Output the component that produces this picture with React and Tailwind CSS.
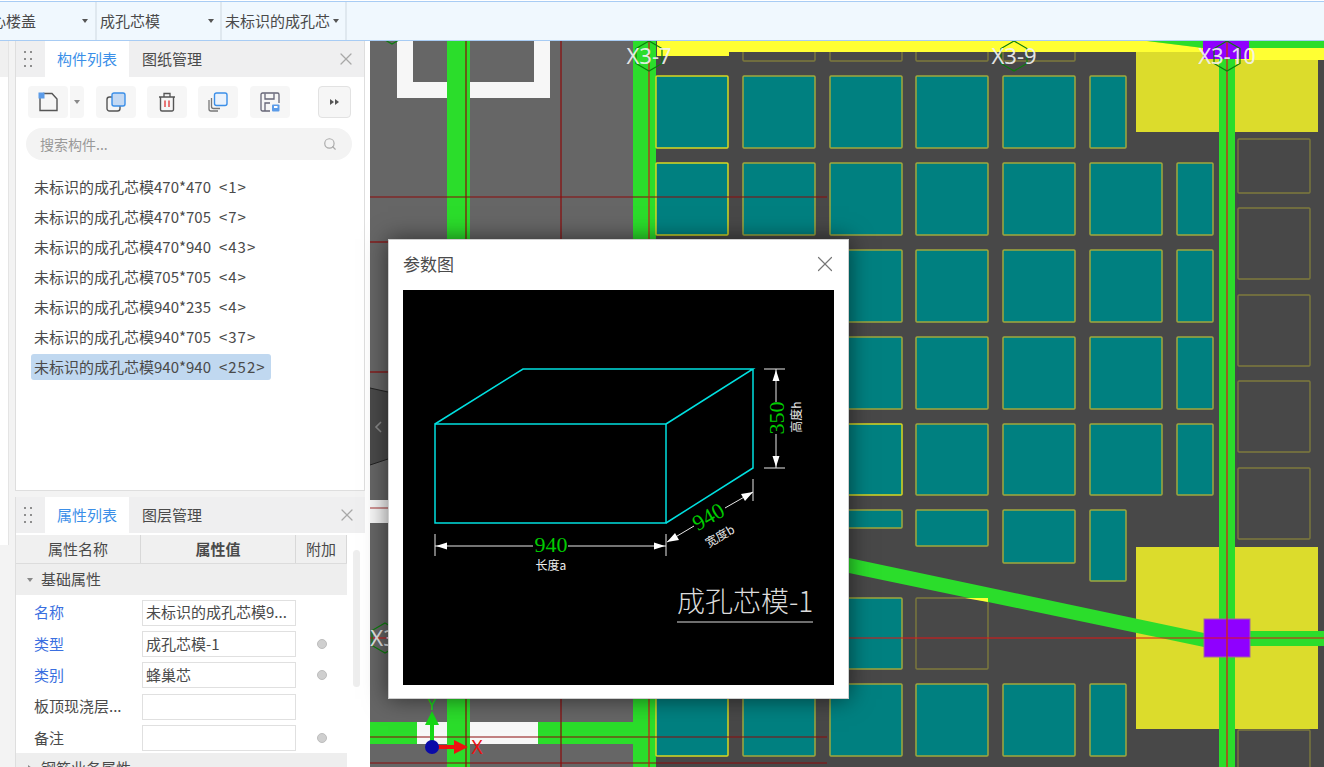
import React from 'react';
import { X, Search } from 'lucide-react';

const components = [
  ['未标识的成孔芯模470*470', '<1>'],
  ['未标识的成孔芯模470*705', '<7>'],
  ['未标识的成孔芯模470*940', '<43>'],
  ['未标识的成孔芯模705*705', '<4>'],
  ['未标识的成孔芯模940*235', '<4>'],
  ['未标识的成孔芯模940*705', '<37>'],
  ['未标识的成孔芯模940*940', '<252>', true],
];

const props = [
  { name: '名称', value: '未标识的成孔芯模9...', blue: true },
  { name: '类型', value: '成孔芯模-1', blue: true, radio: true },
  { name: '类别', value: '蜂巢芯', blue: true, radio: true },
  { name: '板顶现浇层...', value: '' },
  { name: '备注', value: '', radio: true },
];

const COLS = [[656, 728], [743, 815], [830, 902], [916, 988], [1003, 1075], [1090, 1162], [1177, 1213]];
const NARROW = [1090, 1126];
const FULL_ROWS = [[163, 235], [250, 322], [337, 409], [424, 495]];

// teal slabs of the floor plan: [x1, y1, x2, y2]
const slabs = [
  ...COLS.slice(0, 5).map((c) => [c[0], 76, c[1], 148]),
  [NARROW[0], 76, NARROW[1], 148],
  ...FULL_ROWS.flatMap(([y1, y2]) => COLS.map((c) => [c[0], y1, c[1], y2])),
  [830, 510, 902, 528],
  [916, 510, 988, 546],
  [1003, 510, 1075, 563],
  [1090, 510, 1126, 581],
  [830, 598, 902, 669],
  [656, 684, 728, 756],
  [743, 684, 815, 756],
  [830, 684, 902, 756],
  [916, 684, 988, 756],
  [1003, 684, 1075, 756],
  [1090, 684, 1126, 756],
];

// empty outlined openings
const outlines = [
  [743, 30, 815, 61], [830, 30, 902, 61], [916, 30, 988, 61], [1003, 30, 1075, 61],
  [1238, 139, 1310, 193], [1238, 208, 1310, 279], [1238, 295, 1310, 366],
  [1238, 381, 1310, 452], [1238, 468, 1310, 539], [1238, 730, 1310, 790],
  [916, 598, 988, 669],
];

function Hex({ cx, cy, r = 15 }) {
  const pts = [0, 1, 2, 3, 4, 5]
    .map((i) => {
      const a = (Math.PI / 3) * i - Math.PI / 2;
      return `${cx + r * Math.cos(a)},${cy + r * Math.sin(a)}`;
    })
    .join(' ');
  return <polygon points={pts} fill="none" stroke="#0b7d0b" strokeWidth="1.2" />;
}

function AxisLabel({ x, y, children }) {
  return (
    <text x={x} y={y} textAnchor="middle" fontSize="22" fontFamily="'Noto Sans', sans-serif" fill="#f2f2f2" fillOpacity="0.92">
      {children}
    </text>
  );
}

function PlanCanvas() {
  return (
    <svg viewBox="370 41 954 726" className="block w-full h-full">
      <rect x="370" y="41" width="954" height="726" fill="#666666" />
      <rect x="656" y="41" width="668" height="726" fill="#484848" />

      {/* white beams */}
      <path d="M397 41H413V82H534V41H550V98H397Z" fill="#f7f7f7" />
      <rect x="370" y="500" width="18" height="23" fill="#f7f7f7" />
      <rect x="417" y="722" width="121" height="22" fill="#f7f7f7" />

      {/* dark patch next to the panel handle */}
      <path d="M370 388L388 392V459L370 465Z" fill="#4a4a4a" />
      <path d="M370 388L388 392M370 465L388 459" stroke="#222" strokeWidth="1" />
      <path d="M381 422L376 427L381 432" fill="none" stroke="#8a8a8a" strokeWidth="1.6" />

      {/* green beams */}
      <rect x="447" y="41" width="23" height="726" fill="#2bdd2b" />
      <rect x="633" y="41" width="23" height="726" fill="#2bdd2b" />
      <rect x="370" y="722" width="47" height="22" fill="#2bdd2b" />
      <rect x="538" y="722" width="95" height="22" fill="#2bdd2b" />

      {outlines.map(([x1, y1, x2, y2]) => (
        <rect key={`${x1}-${y1}`} x={x1} y={y1} width={x2 - x1} height={y2 - y1} rx="1" fill="none" stroke="#7d7a3c" strokeWidth="1.4" />
      ))}

      {/* teal slabs */}
      {slabs.map(([x1, y1, x2, y2]) => (
        <rect
          key={`${x1}-${y1}`}
          x={x1}
          y={y1}
          width={x2 - x1}
          height={y2 - y1}
          rx="1"
          fill="#008080"
          stroke={x1 === 656 || (x1 === 830 && y1 === 424) ? '#d8d820' : '#a0a83c'}
          strokeWidth="1.5"
        />
      ))}

      {/* column caps */}
      <rect x="1136" y="41" width="182" height="91" fill="#dcdc2c" />
      <rect x="1136" y="547" width="182" height="182" fill="#dcdc2c" />

      {/* top band */}
      <path d="M657 41H1147L1203 48V52H729V56H657Z" fill="#ffff33" />
      <rect x="1235" y="48" width="89" height="12" fill="#ffff33" />
      <path d="M1147 41H1324V48H1203Z" fill="#2bdd2b" />

      {/* green on top of the caps */}
      <rect x="1219" y="41" width="16" height="726" fill="#2bdd2b" />
      <path d="M849 558L1204 633V647L849 573Z" fill="#2bdd2b" />
      <rect x="1250" y="631" width="74" height="15" fill="#2bdd2b" />
      <path d="M965 598H988V602Z" fill="#ffff33" />

      {/* columns */}
      <rect x="1203" y="41" width="46" height="18" fill="#8f00ff" />
      <rect x="1204" y="619" width="46" height="38" fill="#8f00ff" stroke="#a06a9a" strokeWidth="1" />

      {/* axis lines */}
      <g stroke="#8b0a0a" strokeWidth="1.2">
        <line x1="466" y1="41" x2="466" y2="767" />
        <line x1="561" y1="41" x2="561" y2="767" />
        <line x1="370" y1="197" x2="827" y2="197" />
        <line x1="370" y1="242" x2="388" y2="242" />
        <line x1="370" y1="372" x2="388" y2="372" />
        <line x1="370" y1="737" x2="827" y2="737" />
        <line x1="370" y1="763" x2="827" y2="763" />
      </g>
      <line x1="370" y1="508" x2="388" y2="508" stroke="#c47a7a" strokeWidth="1.6" />
      <line x1="649" y1="41" x2="649" y2="767" stroke="#cc1a1a" strokeWidth="1.2" />
      <line x1="1227" y1="41" x2="1227" y2="767" stroke="#c82a1a" strokeWidth="1.4" />
      <line x1="370" y1="638" x2="1324" y2="638" stroke="#e01414" strokeWidth="1.2" />

      {/* axis bubbles */}
      <Hex cx={392} cy={29} />
      <Hex cx={649} cy={56} />
      <Hex cx={1014} cy={56} />
      <Hex cx={1227} cy={56} />
      <Hex cx={385} cy={638} />
      <AxisLabel x={649} y={64}>X3-7</AxisLabel>
      <AxisLabel x={1014} y={64}>X3-9</AxisLabel>
      <AxisLabel x={1227} y={64}>X3-10</AxisLabel>
      <AxisLabel x={383} y={646}>X3</AxisLabel>

      {/* ucs gizmo */}
      <rect x="430" y="725" width="4" height="22" fill="#16d816" />
      <path d="M432 711L439 725H425Z" fill="#16d816" />
      <text x="432" y="710" textAnchor="middle" fontSize="17" fontFamily="'Noto Sans', sans-serif" fill="#16d816">Y</text>
      <rect x="432" y="745" width="24" height="4" fill="#ee1111" />
      <path d="M468 747L454 740V754Z" fill="#ee1111" />
      <text x="477" y="754" textAnchor="middle" fontSize="19" fontFamily="'Noto Sans', sans-serif" fill="#ee1111">X</text>
      <circle cx="432" cy="747" r="7" fill="#0a0aa8" />
    </svg>
  );
}

function Dim({ d }) {
  return <path d={d} stroke="#e8e8e8" strokeWidth="1" fill="none" />;
}

function ParamDrawing() {
  const cad = "'Liberation Serif', 'Noto Sans CJK SC', serif";
  const cjk = "'Noto Sans CJK SC', sans-serif";
  return (
    <svg viewBox="403 290 431 395" className="block w-full h-full bg-black">
      <g stroke="#00e0e0" strokeWidth="1.5" fill="none">
        <rect x="435" y="424" width="231" height="99" />
        <path d="M435 424L523 369H753L666 424M753 369V468L666 523" />
      </g>

      {/* length */}
      <Dim d="M435 534V556M666 534V556M435 546H533M568 546H666" />
      <path d="M436 546L447 542.5V549.5ZM665 546L654 542.5V549.5Z" fill="#fff" />
      <text x="551" y="552" textAnchor="middle" fontSize="22" fontFamily={cad} fill="#00cc00">940</text>
      <text x="551" y="570" textAnchor="middle" fontSize="12" fontFamily={cjk} fill="#f0f0f0">长度a</text>

      {/* height */}
      <Dim d="M764 369H785M764 468H785M776 369V402M776 434V468" />
      <path d="M776 370L772.5 381H779.5ZM776 467L772.5 456H779.5Z" fill="#fff" />
      <text transform="translate(784 418) rotate(-90)" textAnchor="middle" fontSize="22" fontFamily={cad} fill="#00cc00">350</text>
      <text transform="translate(801 417) rotate(-90)" textAnchor="middle" fontSize="12" fontFamily={cjk} fill="#e8e8e8">高度h</text>

      {/* width */}
      <Dim d="M753 479V501M667 542L694 526M725 508L753 492" />
      <path d="M753 492L741 494L745 501ZM667 542L679 540L675 533Z" fill="#fff" />
      <text transform="translate(712 523) rotate(-30)" textAnchor="middle" fontSize="22" fontFamily={cad} fill="#00cc00">940</text>
      <text transform="translate(722 540) rotate(-30)" textAnchor="middle" fontSize="12" fontFamily={cjk} fill="#e8e8e8">宽度b</text>

      <text x="677" y="612" fontSize="28" fontWeight="300" fontFamily={cjk} fill="#dcdcdc">成孔芯模-1</text>
      <line x1="677" y1="622" x2="813" y2="622" stroke="#dcdcdc" strokeWidth="1" />
    </svg>
  );
}

function Grip() {
  return (
    <div className="w-[29px] pl-[8px] flex shrink-0">
      <div className="grid grid-cols-2 gap-x-[4px] gap-y-[5px]">
        {[0, 1, 2, 3, 4, 5].map((i) => (
          <span key={i} className="w-[2px] h-[2px] bg-[#8e8e8e]" />
        ))}
      </div>
    </div>
  );
}

function PanelTabs({ active, other }) {
  return (
    <div className="flex items-center h-[36px] bg-[#efeff0] shrink-0">
      <Grip />
      <div className="w-[84px] h-full bg-white flex items-center justify-center text-[#3b8fe8]">{active}</div>
      <div className="ml-[13px] text-[#4a4a4a]">{other}</div>
      <X size={20} strokeWidth={1.5} className="ml-auto mr-[8px] text-[#a8a8a8]" />
    </div>
  );
}

function ToolBtn({ children, className = 'w-[40px]' }) {
  return (
    <button className={`h-[32px] bg-[#f6f6f6] rounded-[4px] flex items-center justify-center ${className}`}>
      {children}
    </button>
  );
}

function NewIcon() {
  return (
    <svg width="20" height="20" viewBox="0 0 20 20" fill="none">
      <path d="M2 5V18.5H19V7L14 1.5H5" stroke="#555" strokeWidth="1.4" />
      <rect x="0.5" y="0.5" width="6" height="6" fill="#5b9be8" />
    </svg>
  );
}

function CopyIcon() {
  return (
    <svg width="20" height="20" viewBox="0 0 20 20" fill="none">
      <rect x="1" y="5" width="13" height="14" rx="2.5" stroke="#555" strokeWidth="1.4" />
      <rect x="6" y="1" width="13" height="13" rx="2" fill="#c4d9f3" stroke="#3b8fe8" strokeWidth="1.4" />
    </svg>
  );
}

function TrashIcon() {
  return (
    <svg width="18" height="20" viewBox="0 0 18 20" fill="none">
      <path d="M1 5H17M6 5V1.5H12V5" stroke="#555" strokeWidth="1.3" />
      <path d="M2.5 5V17.5A1.5 1.5 0 0 0 4 19H14A1.5 1.5 0 0 0 15.5 17.5V5" stroke="#555" strokeWidth="1.4" />
      <path d="M7 8.5V15M11 8.5V15" stroke="#e34b4b" strokeWidth="1.5" />
    </svg>
  );
}

function LayersIcon() {
  return (
    <svg width="20" height="20" viewBox="0 0 20 20" fill="none">
      <path d="M1 8V17A2 2 0 0 0 3 19H10" stroke="#777" strokeWidth="1.3" />
      <path d="M3.5 6V14.5A2 2 0 0 0 5.5 16.5H12" stroke="#777" strokeWidth="1.3" />
      <rect x="6.5" y="1" width="12.5" height="12.5" rx="2" fill="#eaf2fc" stroke="#3b8fe8" strokeWidth="1.4" />
    </svg>
  );
}

function SaveIcon() {
  return (
    <svg width="20" height="20" viewBox="0 0 20 20" fill="none">
      <path d="M2.5 1H17.5A1.5 1.5 0 0 1 19 2.5V11M10 19H2.5A1.5 1.5 0 0 1 1 17.5V2.5A1.5 1.5 0 0 1 2.5 1" stroke="#667" strokeWidth="1.3" />
      <path d="M5 1.5V7H14V1.5M5 19V11H10" stroke="#667" strokeWidth="1.3" />
      <rect x="12" y="12.5" width="7.5" height="7" rx="1" fill="#5b9be8" />
      <rect x="14" y="14" width="3.5" height="2" fill="#fff" />
    </svg>
  );
}

function ComponentList() {
  return (
    <section className="h-[450px] bg-white border border-[#dedede] border-t-0 flex flex-col">
      <PanelTabs active="构件列表" other="图纸管理" />
      <div className="flex items-center h-[32px] mt-[9px] pl-[12px]">
        <ToolBtn><NewIcon /></ToolBtn>
        <button className="w-[14px] h-[32px] ml-[2px] bg-[#f6f6f6] rounded-r-[4px] flex items-center justify-center">
          <span className="border-x-[3px] border-x-transparent border-t-[4px] border-t-[#888]" />
        </button>
        <ToolBtn className="w-[40px] ml-[12px]"><CopyIcon /></ToolBtn>
        <ToolBtn className="w-[40px] ml-[11px]"><TrashIcon /></ToolBtn>
        <ToolBtn className="w-[40px] ml-[11px]"><LayersIcon /></ToolBtn>
        <ToolBtn className="w-[40px] ml-[12px]"><SaveIcon /></ToolBtn>
        <button className="w-[33px] h-[32px] ml-[28px] bg-[#f6f6f6] border border-[#e2e2e2] rounded-[4px] flex items-center justify-center gap-[1px]">
          <span className="border-y-[3.5px] border-y-transparent border-l-[4px] border-l-[#555]" />
          <span className="border-y-[3.5px] border-y-transparent border-l-[4px] border-l-[#555]" />
        </button>
      </div>
      <div className="mt-[10px] ml-[10px] w-[326px] h-[32px] rounded-full bg-[#f3f3f3] flex items-center pl-[14px] pr-[15px]">
        <span className="text-[14px] text-[#999]">搜索构件...</span>
        <Search size={14} className="ml-auto text-[#aaa]" />
      </div>
      <ul className="mt-[12px] ml-[15px] flex flex-col items-start">
        {components.map(([name, count, selected]) => (
          <li key={name} className="h-[30px] flex items-center">
            <span className={`h-[26px] flex items-center pl-[3px] rounded-[3px] text-[#4a4a4a] whitespace-nowrap ${selected ? 'bg-[#c0d8f0] pr-[5px]' : 'pr-[3px]'}`}>
              {name}
              <span className="ml-[8px] tracking-[1px]">{count}</span>
            </span>
          </li>
        ))}
      </ul>
    </section>
  );
}

function PropertyRow({ row }) {
  return (
    <div className="h-[31.3px] flex items-center">
      <span className={`w-[126px] pl-[18px] whitespace-nowrap ${row.blue ? 'text-[#3a6fe0]' : 'text-[#4a4a4a]'}`}>{row.name}</span>
      <div className="w-[154px] h-[26px] border border-[#e0e0e0] bg-white flex items-center pl-[3px] text-[#4a4a4a] whitespace-nowrap overflow-hidden">
        {row.value}
      </div>
      {row.radio && <span className="ml-[21px] w-[10px] h-[10px] rounded-full bg-[#cfcfcf] border border-[#bdbdbd]" />}
    </div>
  );
}

function PropertyList() {
  return (
    <section className="relative flex-1 mt-[6px] bg-white border-l border-[#dedede] overflow-hidden">
      <PanelTabs active="属性列表" other="图层管理" />
      <div className="w-[331px] h-[29px] mt-[2px] flex bg-[#f0f0f0] border-b border-[#dcdcdc] text-[#4a4a4a]">
        <div className="w-[125px] flex items-center justify-center border-r border-[#d8d8d8]">属性名称</div>
        <div className="w-[155px] flex items-center justify-center border-r border-[#d8d8d8] font-bold">属性值</div>
        <div className="flex-1 flex items-center justify-center border-r border-[#d8d8d8]">附加</div>
      </div>
      <div className="w-[331px] h-[31px] bg-[#eeeeee] flex items-center text-[#4a4a4a]">
        <span className="ml-[11px] border-x-[3.5px] border-x-transparent border-t-[4px] border-t-[#888]" />
        <span className="ml-[8px]">基础属性</span>
      </div>
      <div className="pt-[2px]">
        {props.map((row) => (
          <PropertyRow key={row.name} row={row} />
        ))}
      </div>
      <div className="w-[331px] h-[30px] bg-[#eeeeee] flex items-center text-[#4a4a4a]">
        <span className="ml-[12px] border-y-[3.5px] border-y-transparent border-l-[4px] border-l-[#888]" />
        <span className="ml-[9px]">钢筋业务属性</span>
      </div>
      <div className="absolute left-[337px] top-[53px] w-[7px] h-[137px] rounded-full bg-[#eeeeee]" />
    </section>
  );
}

function ParamDialog() {
  return (
    <div className="absolute left-[18px] top-[198px] w-[461px] h-[460px] bg-white border border-[#cfcfcf] shadow-[0_0_22px_rgba(0,0,0,0.55)] flex flex-col">
      <div className="h-[50px] flex items-center pl-[14px] pr-[10px] pb-[2px] text-[#4a4a4a] text-[17px]">
        <span>参数图</span>
        <X size={26} strokeWidth={1.1} className="ml-auto text-[#777]" />
      </div>
      <div className="mx-[14px] w-[431px] h-[395px]">
        <ParamDrawing />
      </div>
    </div>
  );
}

function TopSelect({ label, className }) {
  return (
    <div className={`h-full flex items-center border-r-2 border-[#dfe8ef] ${className}`}>
      <span className="whitespace-nowrap text-[#4a4a4a]">{label}</span>
      <span className="ml-auto border-x-[3px] border-x-transparent border-t-[4px] border-t-[#555]" />
    </div>
  );
}

export default function App() {
  return (
    <div className="w-[1324px] h-[767px] overflow-hidden flex flex-col bg-white text-[15px] font-['Noto_Sans_CJK_SC','Noto_Sans',sans-serif]">
      <header className="h-[40px] shrink-0 mt-px bg-[#f0f8fe] border-y border-[#a8ccf4] flex items-center overflow-hidden">
        <TopSelect label="空心楼盖" className="w-[97px] pr-[7px] [&>span:first-child]:-ml-[24px]" />
        <TopSelect label="成孔芯模" className="w-[125px] pl-[3px] pr-[6px]" />
        <TopSelect label="未标识的成孔芯" className="w-[125px] pl-[3px] pr-[6px]" />
      </header>

      <div className="flex-1 flex min-h-0">
        <aside className="w-[370px] shrink-0 flex bg-[#f3f3f3] overflow-hidden">
          <div className="w-[9px] h-[504px] shrink-0 bg-white border-r border-[#e4e4e4] flex flex-col">
            <div className="h-[36px] bg-[#f0f0f0]" />
          </div>
          <div className="w-[350px] ml-[6px] shrink-0 flex flex-col">
            <ComponentList />
            <PropertyList />
          </div>
          <div className="flex-1 bg-white" />
        </aside>

        <main className="relative flex-1 min-w-0">
          <PlanCanvas />
          <ParamDialog />
        </main>
      </div>
    </div>
  );
}
